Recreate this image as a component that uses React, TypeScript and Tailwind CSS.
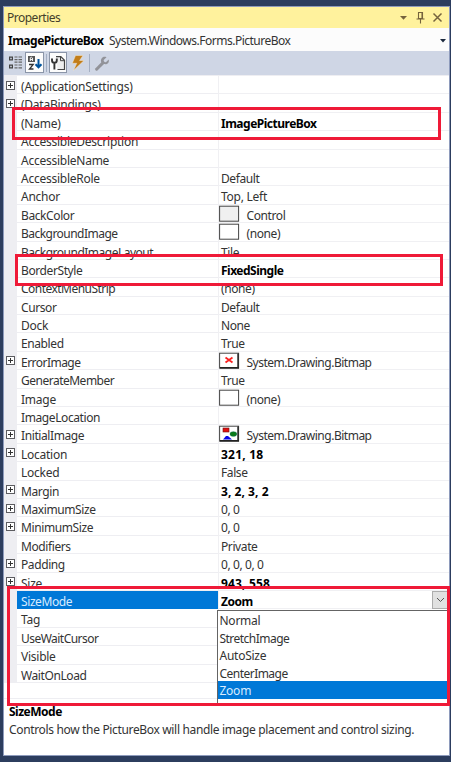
import React from "react";

type Row = {
  name: string;
  value?: string;
  expand?: boolean;
  bold?: boolean;
  swatch?: "control" | "empty" | "error" | "initial";
  track?: string;
  valueTrack?: string;
};

const TIGHT = "tracking-[-0.53px]";
const NORMAL = "tracking-[-0.4px]";
const LOOSE = "tracking-[-0.25px]";

const rows: Row[] = [
  { name: "(ApplicationSettings)", expand: true, track: "tracking-[-0.21px]" },
  { name: "(DataBindings)", expand: true, track: LOOSE },
  { name: "(Name)", value: "ImagePictureBox", bold: true, track: LOOSE },
  { name: "AccessibleDescription", track: LOOSE },
  { name: "AccessibleName", track: LOOSE },
  { name: "AccessibleRole", value: "Default", track: LOOSE },
  { name: "Anchor", value: "Top, Left", track: LOOSE, valueTrack: LOOSE },
  { name: "BackColor", value: "Control", swatch: "control" },
  { name: "BackgroundImage", value: "(none)", swatch: "empty", track: TIGHT },
  { name: "BackgroundImageLayout", value: "Tile", track: "tracking-[-0.5px]" },
  { name: "BorderStyle", value: "FixedSingle", bold: true },
  { name: "ContextMenuStrip", value: "(none)", track: TIGHT },
  { name: "Cursor", value: "Default" },
  { name: "Dock", value: "None", track: LOOSE },
  { name: "Enabled", value: "True" },
  { name: "ErrorImage", value: "System.Drawing.Bitmap", expand: true, swatch: "error", track: TIGHT, valueTrack: "tracking-[-0.49px]" },
  { name: "GenerateMember", value: "True", track: "tracking-[-0.5px]" },
  { name: "Image", value: "(none)", swatch: "empty", track: LOOSE },
  { name: "ImageLocation" },
  { name: "InitialImage", value: "System.Drawing.Bitmap", expand: true, swatch: "initial", valueTrack: "tracking-[-0.49px]" },
  { name: "Location", value: "321, 18", expand: true, bold: true, track: LOOSE, valueTrack: "tracking-[0.2px]" },
  { name: "Locked", value: "False", track: LOOSE },
  { name: "Margin", value: "3, 2, 3, 2", expand: true, bold: true, valueTrack: "tracking-[0.05px]" },
  { name: "MaximumSize", value: "0, 0", expand: true },
  { name: "MinimumSize", value: "0, 0", expand: true },
  { name: "Modifiers", value: "Private" },
  { name: "Padding", value: "0, 0, 0, 0", expand: true },
  { name: "Size", value: "943, 558", expand: true, bold: true, track: LOOSE, valueTrack: "tracking-[0.15px]" },
  { name: "SizeMode", value: "Zoom", bold: true },
  { name: "Tag", track: LOOSE },
  { name: "UseWaitCursor", track: TIGHT },
  { name: "Visible", track: LOOSE },
  { name: "WaitOnLoad" },
];

const options = ["Normal", "StretchImage", "AutoSize", "CenterImage", "Zoom"];

function Plus() {
  return (
    <svg width="9" height="9" viewBox="0 0 9 9" className="mt-[4.6px] ml-[2px] block">
      <rect x=".5" y=".5" width="8" height="8" fill="#fff" stroke="#5c5c60" />
      <path d="M2 4.5h5M4.5 2v5" stroke="#333" />
    </svg>
  );
}

function Swatch({ kind }: { kind: NonNullable<Row["swatch"]> }) {
  return (
    <svg width="21" height="17" viewBox="0 0 21 17" className="block shrink-0">
      <rect x=".6" y="1.2" width="19" height="15" fill={kind === "control" ? "#f0f0f0" : "#fff"} stroke="#444" />
      {kind === "error" && (
        <>
          <path d="M19 1.5v14M1 15.8h19" stroke="#222" strokeWidth="1.4" />
          <path d="M6.5 5.5l7 5M13.5 5.5l-7 5" stroke="#fa2020" strokeWidth="1.8" />
        </>
      )}
      {kind === "initial" && (
        <>
          <path d="M19 1.5v14M1 15.8h19" stroke="#222" strokeWidth="1.4" />
          <rect x="4" y="3" width="6" height="4" fill="#e01010" stroke="#701010" strokeWidth=".6" />
          <path d="M4 14.5l3-3.5h2l4 3.5z" fill="#0808e8" />
          <ellipse cx="14.4" cy="9" rx="3.4" ry="2.3" fill="#0b7a18" stroke="#064" strokeWidth=".5" />
        </>
      )}
    </svg>
  );
}

function Grid() {
  return (
    <div className="h-[622.5px] shrink-0 overflow-hidden">
      {rows.map((r) => {
        const selected = r.name === "SizeMode";
        return (
          <div key={r.name} className="flex h-[18.4px]">
            <div className="w-[13px] shrink-0 bg-[#eeeef2]">{r.expand && <Plus />}</div>
            <div
              className={
                "w-[201px] shrink-0 border-b pl-1 leading-[21px] " +
                (r.track ?? NORMAL) +
                (selected ? " border-[#0078d7] bg-[#0078d7] text-[#d8ecff]" : " border-[#eeeef2]")
              }
            >
              {r.name}
            </div>
            <div className="flex grow items-start border-b border-l border-[#f0f0f3]">
              {r.swatch && <Swatch kind={r.swatch} />}
              <span
                className={
                  "leading-[21px] " +
                  (r.bold ? "font-bold text-black " : "") +
                  (r.valueTrack ?? (r.bold ? "tracking-[-0.5px]" : NORMAL)) +
                  (r.swatch ? " pl-[6.5px]" : " pl-[2px]")
                }
              >
                {r.value}
              </span>
              {selected && (
                <span className="ml-auto flex h-[18px] w-[17px] items-center justify-center border border-[#adadad] bg-[#e1e1e1]">
                  <svg width="9" height="6" viewBox="0 0 9 6">
                    <path d="M1 1l3.5 3.5L8 1" fill="none" stroke="#555" />
                  </svg>
                </span>
              )}
            </div>
          </div>
        );
      })}
      <div className="flex h-4">
        <div className="w-[214px] border-b border-[#eeeef2]" />
      </div>
    </div>
  );
}

function TitleBar() {
  return (
    <div className="flex h-[21px] shrink-0 items-center bg-[#fff29d] pl-[3px]">
      <span className="pt-px tracking-[-0.5px] text-[#443f2b]">Properties</span>
      <svg width="47" height="14" viewBox="0 0 47 14" className="mr-[5px] ml-auto" fill="none" stroke="#75633d">
        <path d="M3 5h7l-3.5 3.8z" fill="#75633d" stroke="none" />
        <path d="M21.5 1.5h4v6h-4zM19.5 8h8M23.5 8v4.5M25 2v5" strokeWidth="1.1" />
        <path d="M36.5 2.5l8 8M44.5 2.5l-8 8" strokeWidth="1.5" />
      </svg>
    </div>
  );
}

function Toolbar() {
  return (
    <div className="h-6 shrink-0 bg-[#cfd6e5]">
      <svg width="112" height="24" viewBox="4 51 112 24" className="block">
        <g fill="none" stroke="#444" strokeWidth="1.2">
          <path d="M9.6 57.1h2.8v2.8H9.6zM9.6 65.1h2.8v2.8H9.6z" />
          <path d="M14.5 57h3M18.5 57h3.5M14.5 59.6h3M18.5 59.6h3.5M14.5 62.2h3M18.5 62.2h3.5M14.5 65h3M18.5 65h3.5M14.5 67.8h3M18.5 67.8h3.5" stroke="#666" />
        </g>
        <rect x="25.5" y="52.5" width="18" height="20" fill="#fcfcfc" stroke="#8b95a8" />
        <rect x="28" y="56" width="7" height="6" fill="#555" />
        <path d="M30.3 61v-3l1-1 1.2 1v3M30.3 59.5h2" fill="none" stroke="#fff" strokeWidth=".9" />
        <path d="M29 64.5h4.2L29.5 69h4" fill="none" stroke="#333" strokeWidth="1.3" />
        <path d="M38.5 59v8M35.5 64.3l3 3 3-3" fill="none" stroke="#00539c" strokeWidth="2" />
        <path d="M46.5 54v18M89.5 54v18" stroke="#a4afc3" />
        <rect x="49.5" y="52.5" width="17" height="20" fill="#fcfcfc" stroke="#8b95a8" />
        <path d="M56 56.6h4.8l3.7 3.7v9.2h-7" fill="#eee" stroke="#444" strokeWidth="1.2" />
        <path d="M60.5 57v3.7h4" fill="none" stroke="#444" />
        <path d="M52 58.4v1.8q0 2.6 2.4 2.6t2.4-2.6v-1.8M54.4 62.5v7" fill="none" stroke="#333" strokeWidth="1.9" />
        <path d="M75.5 55.5h7.5l-3.4 5h4.4l-10.5 10 3.2-7.2h-4.4z" fill="#c27d1a" stroke="#f4ead6" strokeWidth=".5" />
        <path d="M96.6 69.2l6.6-6.6" stroke="#929399" strokeWidth="3" strokeLinecap="round" />
        <path d="M106.5 57.2l-2.8 2.8.2 2 2 .2 2.8-2.8c.8 3-1.3 5.2-4.2 4.7-3.4-.5-4.4-3.3-2.9-5.6 1-1.6 2.8-2.2 4.9-1.3z" fill="#929399" />
      </svg>
    </div>
  );
}

export default function App() {
  return (
    <div className="relative h-[762px] w-[451px] overflow-hidden bg-[#2c3d5e] pt-[6px] font-['Noto_Sans','Open_Sans',sans-serif] text-[12px] leading-[18px] whitespace-nowrap text-[#333]">
      <div className="ml-[3px] flex h-[750px] w-[447px] flex-col border border-[#8e9bbc] bg-white">
        <TitleBar />
        <div className="flex h-[23px] shrink-0 items-center bg-[#fcfcfc] pt-[2px] pr-[3px] pl-1">
          <b className="tracking-[-0.5px] text-black">ImagePictureBox</b>
          <span className="ml-[5.5px] tracking-[-0.5px]">System.Windows.Forms.PictureBox</span>
          <svg width="6" height="4" viewBox="0 0 6 4" className="ml-auto">
            <path d="M0 0h6L3 3.5z" fill="#1b293e" />
          </svg>
        </div>
        <Toolbar />
        <div className="h-px shrink-0 bg-[#eeeef2]" />
        <Grid />
        <div className="pt-[4px] pl-[5px]">
          <div className="leading-[18px] font-bold tracking-[-0.5px] text-black">SizeMode</div>
          <div className="leading-[18px] tracking-[-0.34px]">
            Controls how the PictureBox will handle image placement and control sizing.
          </div>
        </div>
      </div>
      <div className="absolute top-[610px] left-[217px] h-[95px] w-[231px] border border-[#646464] bg-white">
        {options.map((o) => (
          <div
            key={o}
            className={
              "h-[17.6px] pl-[1.5px] leading-[19px] " +
              (o.endsWith("Image") ? TIGHT : LOOSE) +
              (o === "Zoom" ? " bg-[#0078d7] text-[#d8ecff]" : "")
            }
          >
            {o}
          </div>
        ))}
      </div>
      <div className="absolute top-[107px] left-[12px] h-[33px] w-[429px] border-3 border-[#ef1a38]" />
      <div className="absolute top-[254px] left-[15px] h-[32px] w-[428px] border-3 border-[#ef1a38]" />
      <div className="absolute top-[586px] left-[7px] h-[120px] w-[443px] border-3 border-[#ef1a38]" />
    </div>
  );
}
